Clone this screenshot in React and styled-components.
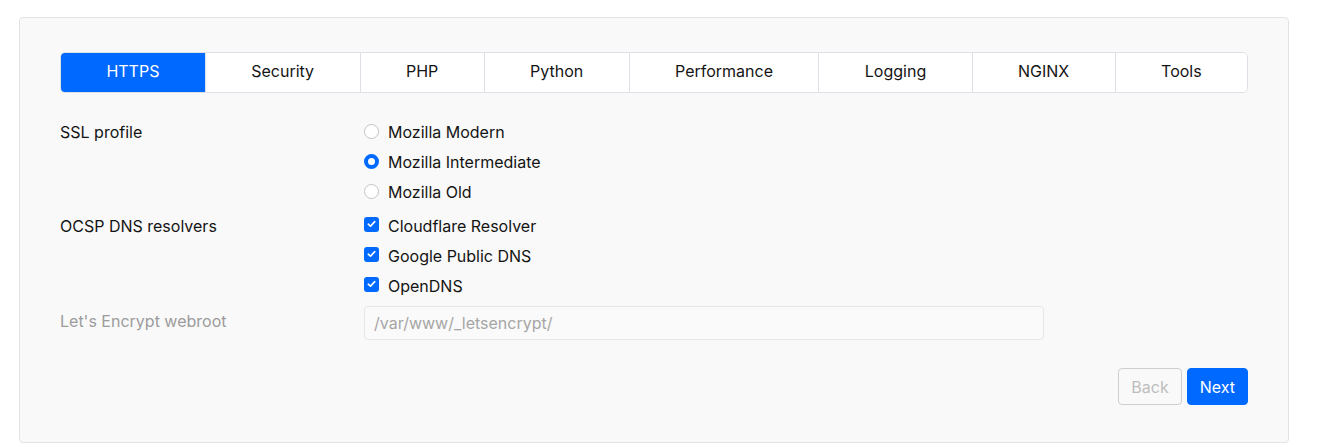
import React from "react";
import styled, { createGlobalStyle } from "styled-components";

const GlobalStyle = createGlobalStyle`
  body {
    margin: 0;
    background: #ffffff;
    font-family: "Inter", "Liberation Sans", sans-serif;
    color: #141414;
  }
`;

const Page = styled.div`
  padding: 17px 28px 5px 19px;
`;

const Panel = styled.div`
  background: #f9f9f9;
  border: 1px solid #e3e3e3;
  border-radius: 4px;
  padding: 34px 40px 37px 40px;
`;

const Tabs = styled.div`
  display: flex;
  height: 39px;
  border: 1px solid #dde0e6;
  border-radius: 5px;
  background: #fff;
  overflow: hidden;
`;

const Tab = styled.div`
  flex: 1 1 auto;
  display: flex;
  align-items: center;
  justify-content: center;
  padding: 0 20px 3px;
  font-size: 16px;
  color: ${(p) => (p.active ? "#fff" : "#141414")};
  background: ${(p) => (p.active ? "#0069ff" : "#fff")};
  & + & {
    border-left: 1px solid #dde0e6;
  }
`;

const Form = styled.div`
  display: flex;
  flex-direction: column;
  padding-top: 24px;
  gap: 4px;
`;

const Row = styled.div`
  display: grid;
  grid-template-columns: 304px 680px;
  align-items: start;
`;

const Label = styled.div`
  font-size: 16px;
  line-height: 30px;
  color: ${(p) => (p.muted ? "#9c9c9c" : "#141414")};
  padding-top: ${(p) => (p.muted ? "1px" : "0")};
`;

const Options = styled.div`
  display: flex;
  flex-direction: column;
`;

const Option = styled.label`
  display: flex;
  align-items: center;
  gap: 9px;
  height: 30px;
  font-size: 16px;
  color: #141414;
`;

const Radio = styled.span`
  width: 15px;
  height: 15px;
  box-sizing: border-box;
  border-radius: 50%;
  border: ${(p) => (p.checked ? "4.5px solid #0069ff" : "1px solid #c4c4c4")};
  background: #fff;
  margin-top: -2px;
`;

const Check = styled.span`
  width: 15px;
  height: 15px;
  border-radius: 3px;
  background: #0069ff;
  display: flex;
  align-items: center;
  justify-content: center;
  margin-top: -4px;
`;

const Input = styled.input`
  box-sizing: border-box;
  width: 680px;
  height: 34px;
  margin-top: 1px;
  padding: 0 9px;
  border: 1px solid #e6e6e6;
  border-radius: 4px;
  background: #fafafa;
  font-family: inherit;
  font-size: 16px;
  color: #141414;
  &::placeholder {
    color: #a6a6a6;
  }
`;

const Actions = styled.div`
  display: flex;
  justify-content: flex-end;
  gap: 5px;
  margin-top: 28px;
`;

const Button = styled.button`
  height: 37px;
  padding: 0 12px;
  border-radius: 4px;
  font-family: inherit;
  font-size: 16px;
  border: 1px solid ${(p) => (p.primary ? "#0069ff" : "#cfcfcf")};
  background: ${(p) => (p.primary ? "#0069ff" : "transparent")};
  color: ${(p) => (p.primary ? "#fff" : "#bdbdbd")};
`;

const tabs = ["HTTPS", "Security", "PHP", "Python", "Performance", "Logging", "NGINX", "Tools"];

const Tick = () => (
  <svg width="9" height="8" viewBox="0 0 9 8">
    <path d="M1.3 4.2 L3.5 6.2 L7.7 1.6" fill="none" stroke="#fff" strokeWidth="1.7" strokeLinecap="round" strokeLinejoin="round" />
  </svg>
);

export default function App() {
  return (
    <>
      <GlobalStyle />
      <Page>
        <Panel>
          <Tabs>
            {tabs.map((t, i) => (
              <Tab key={t} active={i === 0}>
                {t}
              </Tab>
            ))}
          </Tabs>
          <Form>
            <Row>
              <Label>SSL profile</Label>
              <Options>
                <Option>
                  <Radio />
                  Mozilla Modern
                </Option>
                <Option>
                  <Radio checked />
                  Mozilla Intermediate
                </Option>
                <Option>
                  <Radio />
                  Mozilla Old
                </Option>
              </Options>
            </Row>
            <Row>
              <Label>OCSP DNS resolvers</Label>
              <Options>
                {["Cloudflare Resolver", "Google Public DNS", "OpenDNS"].map((o) => (
                  <Option key={o}>
                    <Check>
                      <Tick />
                    </Check>
                    {o}
                  </Option>
                ))}
              </Options>
            </Row>
            <Row>
              <Label muted>Let's Encrypt webroot</Label>
              <Input placeholder="/var/www/_letsencrypt/" disabled />
            </Row>
          </Form>
          <Actions>
            <Button>Back</Button>
            <Button primary>Next</Button>
          </Actions>
        </Panel>
      </Page>
    </>
  );
}
